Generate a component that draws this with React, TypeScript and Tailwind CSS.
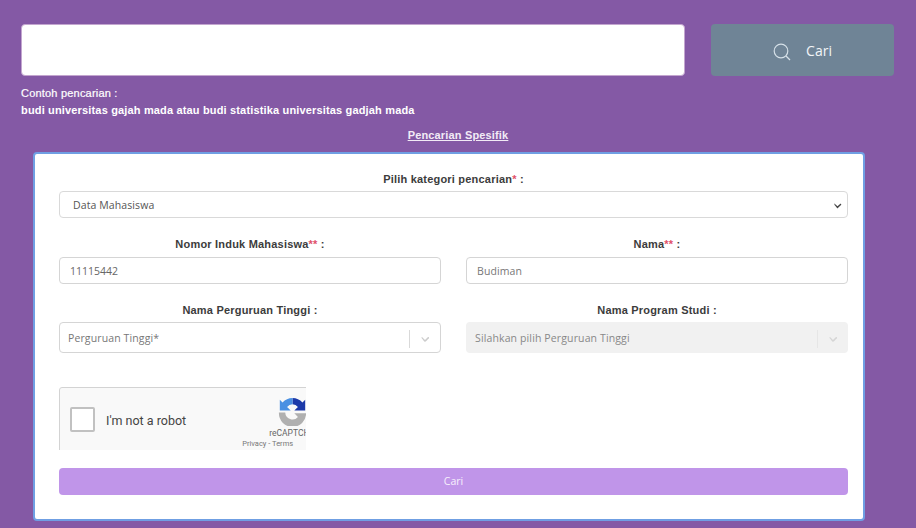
import React from "react";

const Chevron = ({ className }: { className: string }) => (
  <svg viewBox="0 0 20 20" className={className} fill="currentColor">
    <path d="M4.516 7.548c.436-.446 1.043-.481 1.576 0L10 11.295l3.908-3.747c.533-.481 1.141-.446 1.574 0 .436.445.408 1.197 0 1.615-.406.418-4.695 4.502-4.695 4.502a1.095 1.095 0 0 1-1.576 0S5.922 9.581 5.516 9.163c-.409-.418-.436-1.17-.001-1.615z" />
  </svg>
);

const Label = ({ text, stars }: { text: string; stars?: string }) => (
  <div className="text-center font-['Liberation_Sans',sans-serif] text-[11px] leading-[16px] font-bold tracking-[0.2px] text-[#3c3c3c]">
    {text}
    {stars && <span className="text-[#e0506a]">{stars}</span>} :
  </div>
);

export default function App() {
  return (
    <div className="h-[528px] w-[916px] overflow-hidden bg-[#8459a5] font-['Open_Sans',sans-serif]">
      <div className="flex pl-[21px] pt-6">
        <div className="h-[52px] w-[664px] rounded-[4px] border border-[#c3a6cf] bg-white" />
        <div className="ml-[26px] flex h-[52px] w-[183px] items-center justify-center gap-[15px] rounded-[4px] bg-[#6f8496] text-[14px]">
          <svg viewBox="0 0 18 18" className="mt-[3px] h-[18px] w-[18px]" fill="none" stroke="#d5e0e8" strokeWidth="1.2">
            <circle cx="8" cy="8" r="6.8" />
            <path d="M13 13l4 4" />
          </svg>
          <span className="text-[#f2f5f7]">Cari</span>
        </div>
      </div>

      <div className="pl-[21px] pt-[9px] font-['Liberation_Sans',sans-serif] text-[11px] leading-[17px] text-white">
        <div className="font-normal tracking-[0.2px] [-webkit-text-stroke:0.2px_white]">Contoh pencarian :</div>
        <div className="font-bold tracking-[0.16px]">budi universitas gajah mada atau budi statistika universitas gadjah mada</div>
      </div>

      <div className="pt-[8px] text-center font-['Liberation_Sans',sans-serif] text-[11px] leading-[17px] font-bold tracking-[0.16px] text-[#f2ebf6] underline">
        Pencarian Spesifik
      </div>

      <div className="ml-[33px] mt-[8px] h-[369px] w-[832px] rounded-[4px] border-2 border-[#6f9fe3] bg-white pl-6 pr-[15px] pt-[17px]">
        <Label text="Pilih kategori pencarian" stars="*" />
        <div className="mt-[4px] flex h-[27px] items-center justify-between rounded-[4px] border border-[#d9d9d9] pl-[13px] pr-[3px] pt-[2px] text-[10.5px] tracking-[0.1px] text-[#555]">
          <span>Data Mahasiswa</span>
          <Chevron className="h-[13px] w-[13px] text-[#444]" />
        </div>

        <div className="mt-[18px] grid grid-cols-2 gap-x-[25px]">
          <div>
            <Label text="Nomor Induk Mahasiswa" stars="**" />
            <div className="mt-[5px] flex h-[27px] items-center rounded-[4px] border border-[#d5d5d5] pl-[10px] pt-[2px] text-[10.5px] text-[#666]">11115442</div>
          </div>
          <div>
            <Label text="Nama" stars="**" />
            <div className="mt-[5px] flex h-[27px] items-center rounded-[4px] border border-[#d5d5d5] pl-[10px] pt-[2px] text-[10.5px] tracking-[0.1px] text-[#777]">Budiman</div>
          </div>
          <div className="mt-[18px]">
            <Label text="Nama Perguruan Tinggi" />
            <div className="mt-[4px] flex h-[31px] items-center justify-between rounded-[4px] border border-[#d5d5d5] pl-2 pt-[2px] text-[10.5px] tracking-[0.12px] text-[#777]">
              <span>Perguruan Tinggi*</span>
              <div className="flex items-center">
                <div className="h-[18px] w-px bg-[#d9d9d9]" />
                <Chevron className="mx-2 h-[14px] w-[14px] text-[#ccc]" />
              </div>
            </div>
          </div>
          <div className="mt-[18px]">
            <Label text="Nama Program Studi" />
            <div className="mt-[4px] flex h-[31px] items-center justify-between rounded-[4px] bg-[#f1f1f1] pl-[9px] pt-[2px] text-[10.5px] tracking-[0.13px] text-[#888]">
              <span>Silahkan pilih Perguruan Tinggi</span>
              <div className="flex items-center">
                <div className="h-[18px] w-px bg-[#e6e6e6]" />
                <Chevron className="mx-2 h-[14px] w-[14px] text-[#d5d5d5]" />
              </div>
            </div>
          </div>
        </div>

        <div className="mt-[34px] h-[63px] w-[247px] overflow-hidden">
          <div className="flex h-[76px] w-[302px] items-start rounded-[3px] border border-[#d3d3d3] bg-[#f9f9f9] font-['Roboto',sans-serif]">
            <div className="ml-[10px] mt-[19px] h-[25px] w-[25px] rounded-[2px] border-2 border-[#c1c1c1] bg-white" />
            <div className="ml-[11px] mt-[24px] text-[12.5px] leading-[17px] text-[#444]">I'm not a robot</div>
            <div className="ml-[71px] flex w-[70px] shrink-0 flex-col items-center pt-[9px]">
              <svg viewBox="0 0 32 32" className="h-[29px] w-[29px]">
                <path d="M16 1a15 15 0 0 1 11 5l3-3v12H18l4-4a8 8 0 0 0-6-3z" fill="#1c3aa9" />
                <path d="M16 1v7a8 8 0 0 0-6 3l4 4H2V3l3 3a15 15 0 0 1 11-5z" fill="#4a90e2" />
                <path d="M1 17h7a8 8 0 0 0 14 5l-4-4h13a15 15 0 0 1-30 0z" fill="#b0b0b0" />
              </svg>
              <div className="mt-[2px] text-[8.5px] leading-[11px] text-[#666]">reCAPTCHA</div>
              <div className="-ml-[49px] whitespace-nowrap text-[7.5px] leading-[10px] text-[#777]">Privacy - Terms</div>
            </div>
          </div>
        </div>

        <div className="mt-[18px] flex h-[27px] items-center justify-center rounded-[4px] bg-[#c095e9] text-[10.5px] text-[#f7f0fc]">Cari</div>
      </div>
    </div>
  );
}
